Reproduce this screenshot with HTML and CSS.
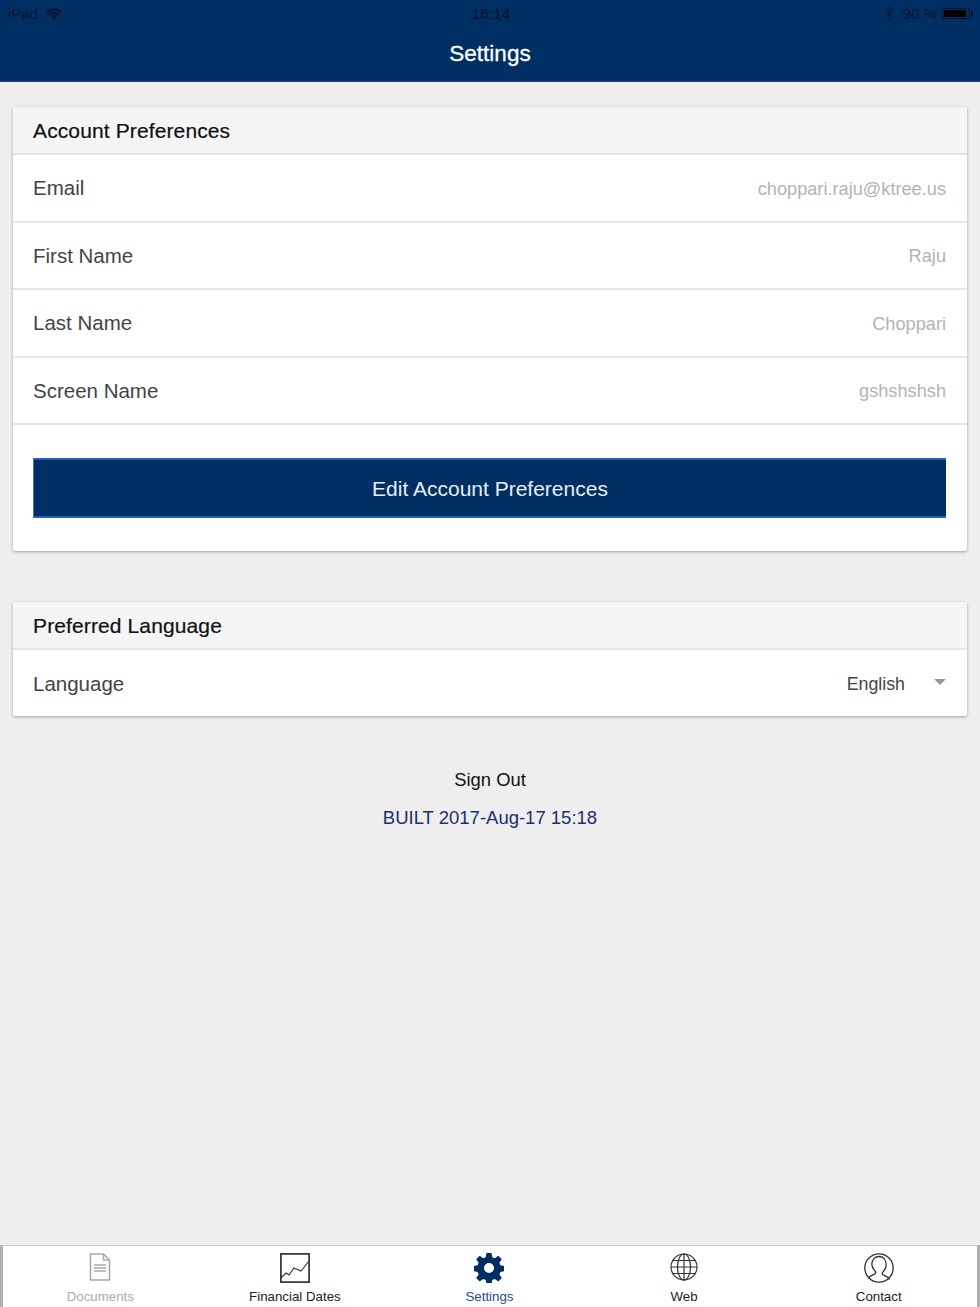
FILE: index.html
```html
<!DOCTYPE html>
<html lang="en">
<head>
  <meta charset="UTF-8" />
  <title>Settings</title>
  <link rel="stylesheet" href="styles.css">
</head>
<body>
  <header class="topbar">
    <div class="statusbar">
      <div class="status-left">
        <span>iPad</span>
        <svg class="wifi" width="16" height="12" viewBox="0 0 16 12">
          <path d="M1 4.200a10 10 0 0 1 14 0M3.400 6.700a6.600 6.600 0 0 1 9.200 0M5.800 9a3.200 3.200 0 0 1 4.400 0" fill="none" stroke="#060d1f" stroke-width="1.600"/>
          <path d="M8 12l-1.600-1.700a2.200 2.200 0 0 1 3.200 0z" fill="#060d1f"/>
        </svg>
      </div>
      <div class="status-time">16:14</div>
      <div class="status-right">
        <svg class="bluetooth" width="10" height="16" viewBox="0 0 10 16">
          <path d="M1 4.500l8 7-4 3.500V1l4 3.500-8 7" fill="none" stroke="#06142f" stroke-width="1"/>
        </svg>
        <span>90 %</span>
        <div class="battery"><div class="battery-fill"></div></div>
      </div>
    </div>
    <h1 class="title">Settings</h1>
  </header>

  <main class="content">
    <section class="card">
      <h2 class="card-head">Account Preferences</h2>
      <div class="row"><span class="row-label">Email</span><span class="row-value">choppari.raju@ktree.us</span></div>
      <div class="row"><span class="row-label">First Name</span><span class="row-value">Raju</span></div>
      <div class="row"><span class="row-label">Last Name</span><span class="row-value">Choppari</span></div>
      <div class="row"><span class="row-label">Screen Name</span><span class="row-value">gshshshsh</span></div>
      <div class="btn-wrap">
        <button class="edit-btn" type="button">Edit Account Preferences</button>
      </div>
    </section>

    <section class="card">
      <h2 class="card-head">Preferred Language</h2>
      <div class="row row-last">
        <span class="row-label">Language</span>
        <div class="select"><span>English</span><span class="caret"></span></div>
      </div>
    </section>

    <div class="signout">Sign Out</div>
    <div class="built">BUILT 2017-Aug-17 15:18</div>
  </main>

  <nav class="tabbar">
    <a class="tab tab-muted">
      <svg width="22" height="28" viewBox="0 0 22 28" fill="none" stroke="#a9a9a9" stroke-width="1.500">
        <path d="M1.500 1h13l6 6v20h-19zM14.500 1v6h6"/>
        <path d="M5 12h12M5 15h12M5 18h12" stroke-width="1.300"/>
      </svg>
      <span>Documents</span>
    </a>
    <a class="tab">
      <svg width="30" height="30" viewBox="0 0 30 30" fill="none" stroke="#333">
        <rect x="0.900" y="0.900" width="28.200" height="28.200" stroke-width="1.700"/>
        <path d="M1 25l5-5 3 2 5-7 7 3 8-10" stroke-width="1.100"/>
      </svg>
      <span>Financial Dates</span>
    </a>
    <a class="tab tab-active">
      <svg width="30" height="30" viewBox="0 0 30 30">
        <path fill="#003063" fill-rule="evenodd" d="M12.500 0h5l.8 4.200 2.500 1 3.500-2.400 3.500 3.500-2.400 3.500 1 2.500 4.200.8v5l-4.200.8-1 2.500 2.400 3.500-3.500 3.500-3.500-2.400-2.500 1-.8 4.200h-5l-.8-4.200-2.500-1-3.500 2.400-3.500-3.500 2.400-3.500-1-2.500-4.200-.8v-5l4.200-.8 1-2.500-2.400-3.500 3.500-3.500 3.500 2.400 2.500-1zM15 10a5 5 0 1 0 0 10 5 5 0 0 0 0-10z"/>
      </svg>
      <span>Settings</span>
    </a>
    <a class="tab">
      <svg width="28" height="28" viewBox="0 0 28 28" fill="none" stroke="#333" stroke-width="1.200">
        <circle cx="14" cy="14" r="13"/>
        <ellipse cx="14" cy="14" rx="6.500" ry="13"/>
        <path d="M14 1v26M1 14h26M3 7.500h22M3 20.500h22"/>
      </svg>
      <span>Web</span>
    </a>
    <a class="tab">
      <svg width="30" height="30" viewBox="0 0 30 30" fill="none" stroke="#333" stroke-width="1.300">
        <circle cx="15" cy="15" r="14.200"/>
        <path d="M4.500 25.500c1-2.500 3.500-3.300 6-4.300 1.500-.6 1.500-2 .7-3-1.700-2-3.400-3.800-3.400-7C7.800 6.500 11 3.500 15 3.500s7.200 3 7.200 8.700c0 3.200-1.700 5-3.400 7-.8 1-.8 2.400.7 3 2.500 1 5 1.800 6 4.300"/>
      </svg>
      <span>Contact</span>
    </a>
  </nav>
</body>
</html>
```

FILE: styles.css
```css
html, body {
  height: 100%;
}
body {
  margin: 0;
  height: 1307px;
  display: flex;
  flex-direction: column;
  overflow: hidden;
  background: #eeeeee;
  color: #444;
  font-family: "Liberation Sans", Arial, sans-serif;
}

/* top bar */
.topbar {
  height: 82px;
  box-sizing: border-box;
  flex-shrink: 0;
  background: #003063;
  border-bottom: 1px solid #3b3f80;
}
.statusbar {
  height: 27px;
  padding: 0 10px 0 8px;
  display: flex;
  align-items: center;
  justify-content: space-between;
  font-size: 15px;
  color: #06142f;
}
.status-left {
  flex: 1;
  display: flex;
  align-items: center;
  gap: 8px;
}
.status-time {
  color: #050f26;
  font-size: 15.500px;
  padding-left: 4px;
}
.status-right {
  flex: 1;
  display: flex;
  align-items: center;
  justify-content: flex-end;
  gap: 5px;
}
.bluetooth {
  margin-right: 4px;
}
.battery {
  width: 28px;
  height: 11px;
  padding: 1px;
  border: 1px solid #06142f;
  border-radius: 2px;
  box-sizing: border-box;
  position: relative;
}
.battery-fill {
  width: 90%;
  height: 100%;
  background: #000;
}
.battery::after {
  content: "";
  position: absolute;
  right: -4px;
  top: 2px;
  width: 2px;
  height: 5px;
  background: #060d1f;
}
.title {
  margin: 0;
  line-height: 54px;
  text-align: center;
  font-size: 22.500px;
  font-weight: normal;
  color: #fff;
  -webkit-text-stroke: 0.300px #fff;
}

/* cards */
.content {
  flex: 1;
  padding: 25px 13px 0 13px;
}
.card {
  background: #fff;
  border-radius: 2px;
  box-shadow: 0 1px 3px rgba(0, 0, 0, 0.35);
  margin-bottom: 51px;
}
.card-head {
  margin: 0;
  height: 48px;
  line-height: 47px;
  padding: 0 20px;
  box-sizing: border-box;
  background: #f5f5f5;
  border-bottom: 2px solid #e6e6e6;
  font-size: 21px;
  letter-spacing: 0.120px;
  font-weight: normal;
  color: #111;
  -webkit-text-stroke: 0.200px #111;
}
.row {
  height: 67.500px;
  padding: 1px 21px 0 20px;
  box-sizing: border-box;
  display: flex;
  align-items: center;
  justify-content: space-between;
  border-bottom: 2px solid #e6e6e6;
}
.row-last {
  height: 66px;
  padding-top: 2px;
  border-bottom: none;
}
.row-label {
  font-size: 20.500px;
  color: #444;
}
.row-value {
  font-size: 18.200px;
  line-height: 22px;
  padding-top: 0.500px;
  color: #b3b3b3;
}
.btn-wrap {
  padding: 33px 21px 33px 20px;
}
.edit-btn {
  display: block;
  width: 100%;
  height: 60px;
  padding: 1px 0 0;
  background: #003063;
  border: none;
  border-top: 2px solid #1f5fd0;
  border-bottom: 2px solid #1f5fd0;
  border-left: 1px solid #4d6fa5;
  font-family: inherit;
  font-size: 21px;
  color: #e8edf3;
}
.select {
  display: flex;
  align-items: center;
  font-size: 17.800px;
  color: #444;
}
.caret {
  margin-left: 29px;
  margin-top: -4px;
  width: 0;
  height: 0;
  border-left: 6.500px solid transparent;
  border-right: 6.500px solid transparent;
  border-top: 6px solid #999;
}

.signout {
  padding-top: 2px;
  text-align: center;
  font-size: 18.400px;
  line-height: 22px;
  color: #111;
}
.built {
  margin-top: 16px;
  text-align: center;
  font-size: 18.500px;
  line-height: 22px;
  color: #1c2f6e;
}

/* bottom tabs */
.tabbar {
  height: 62px;
  flex-shrink: 0;
  box-sizing: border-box;
  background: #fff;
  border-top: 1px solid #c8c8c8;
  border-left: 3px solid #b0b0b0;
  border-right: 3px solid #b0b0b0;
  display: grid;
  grid-template-columns: repeat(5, 1fr);
  padding: 0 1px 0 0;
}
.tab {
  display: flex;
  flex-direction: column;
  align-items: center;
  justify-content: space-between;
  padding: 7px 0 3px;
  font-size: 13.300px;
  line-height: 15px;
  color: #222;
}
.tab-muted {
  color: #aaa;
}
.tab-active {
  color: #1f4d86;
}
```
